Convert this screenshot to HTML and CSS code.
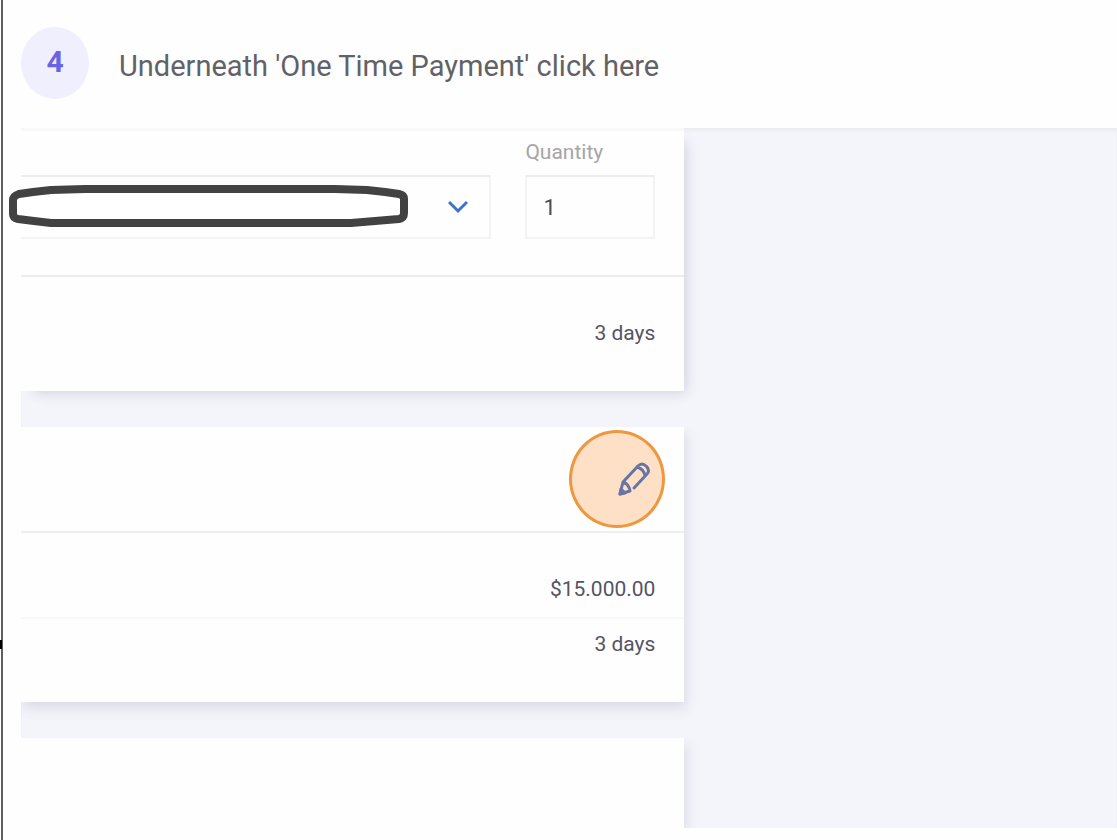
FILE: index.html
```html
<!DOCTYPE html>
<html lang="en">
<head>
<meta charset="utf-8">
<title>Step 4</title>
<link rel="stylesheet" href="styles.css">
</head>
<body>
<main class="step">
  <header class="step-header">
    <span class="step-number">4</span>
    <h1 class="step-title">Underneath 'One Time Payment' click here</h1>
  </header>
  <div class="panel">
    <div class="cards">
      <section class="card card-first">
        <form class="fields">
          <div class="select-wrap">
            <select class="product" aria-label="Product"><option></option></select>
            <svg class="chevron" viewBox="0 0 20 14" aria-hidden="true"><path d="M1 2l9 9 9-9"/></svg>
            <svg class="marker" viewBox="0 0 400 44" aria-hidden="true"><path d="M76 5L42 6L24 8L10 10Q4 12 4 16V30Q4 34 9 35L25 37L42 39H342L390 35Q395 34 395 29V15Q395 11 390 10L376 8L358 6L326 5Z"/></svg>
          </div>
          <div class="quantity">
            <label class="quantity-label" for="quantity">Quantity</label>
            <input class="quantity-input" id="quantity" type="text" value="1">
          </div>
        </form>
        <div class="row row-tall">3 days</div>
      </section>
      <section class="card">
        <div class="card-top">
          <button class="edit" type="button" aria-label="Edit">
            <svg class="pencil" viewBox="0 0 32 34" aria-hidden="true"><path d="M16 26L29 12Q32 9 29 5L28 4Q24 0 20 4L5 20L2 32L12 29M5 20Q11 22 12 29M19 5Q26 7 27 14"/><path class="tip" d="M2 32l1-5 4 4z"/></svg>
          </button>
        </div>
        <div class="row row-amount">$15.000.00</div>
        <div class="row row-days">3 days</div>
      </section>
      <section class="card card-last"></section>
    </div>
  </div>
</main>
</body>
</html>
```
FILE: styles.css
```css
* {
  box-sizing: border-box;
}

body {
  margin: 0;
  background: #fefefe;
  font-family: Roboto, "Liberation Sans", sans-serif;
}

.step {
  position: relative;
  min-height: 100vh;
  margin-left: 1px;
  padding: 0 0 12px 18px;
  border-left: 2px solid #5c6064;
}

.step::before {
  content: "";
  position: absolute;
  left: -3px;
  top: 640px;
  width: 2px;
  height: 9px;
  background: #000;
}

.step-header {
  display: flex;
  align-items: center;
  gap: 30px;
  height: 128px;
  padding-bottom: 2px;
}

.step-number {
  display: flex;
  align-items: center;
  justify-content: center;
  width: 68px;
  height: 72px;
  padding-bottom: 3px;
  border-radius: 50%;
  background: #f0effd;
  color: #6865e5;
  font-size: 30px;
  font-weight: 700;
}

.step-title {
  margin: 0;
  padding-top: 6px;
  color: #626266;
  font-size: 29px;
  font-weight: 400;
}

.panel {
  display: grid;
  grid-template-columns: 664fr 433fr;
  background: #f4f5fb;
  box-shadow: inset 0 3px 3px #ececf0;
}

.cards {
  display: grid;
  gap: 36px;
}

.card {
  background: #fefefe;
  box-shadow: 2px 6px 12px #d9dae4;
  clip-path: inset(0 -14px -22px 0);
}

.card-first {
  border-top: 3px solid #f8f8f9;
  clip-path: inset(0 -14px -22px -12px);
  box-shadow: 8px 8px 12px -6px #d0d1dc;
}

.card-last {
  height: 90px;
  clip-path: inset(0 -14px 0 0);
}

.fields {
  display: grid;
  grid-template-columns: 1fr 130px;
  align-items: end;
  gap: 34px;
  padding: 7px 29px 36px 0;
  border-bottom: 2px solid #ececee;
}

.select-wrap {
  position: relative;
}

.product,
.quantity-input {
  display: block;
  width: 100%;
  height: 64px;
  margin: 0;
  border: 2px solid #f3f3f4;
  border-top-color: #ededee;
  border-radius: 0;
  background: #fefefe;
  color: #4b4b50;
  font: 22px Roboto, "Liberation Sans", sans-serif;
}

.product {
  appearance: none;
  border-left: 0;
}

.quantity-input {
  padding: 0 16px;
}

.quantity-label {
  display: block;
  margin-bottom: 9px;
  color: #a5a5a8;
  font-size: 21px;
  line-height: 28px;
}

.chevron {
  position: absolute;
  right: 23px;
  top: 25px;
  width: 20px;
  height: 14px;
  fill: none;
  stroke: #3c73cf;
  stroke-width: 3;
  pointer-events: none;
}

.marker {
  position: absolute;
  left: -12px;
  top: 9px;
  width: 400px;
  height: 44px;
  fill: #fff;
  stroke: #424242;
  stroke-width: 8;
  stroke-linejoin: round;
  pointer-events: none;
}

.row {
  padding-right: 29px;
  color: #555464;
  font-size: 21px;
  line-height: 28px;
  text-align: right;
}

.row-tall {
  padding-top: 42px;
  padding-bottom: 44px;
}

.card-top {
  display: flex;
  justify-content: flex-end;
  padding: 3px 19px 3px 0;
  border-bottom: 2px solid #efeeee;
}

.edit {
  display: flex;
  align-items: center;
  justify-content: flex-end;
  width: 96px;
  height: 98px;
  padding: 0 12px 0 0;
  border: 3px solid #ee973f;
  border-radius: 50%;
  background: #fee0c7;
}

.pencil {
  width: 32px;
  height: 34px;
  overflow: visible;
  fill: none;
  stroke: #6874a4;
  stroke-width: 3;
  stroke-linecap: round;
  stroke-linejoin: round;
}

.tip {
  fill: #6874a4;
}

.row-amount {
  padding-top: 42px;
  padding-bottom: 14px;
  border-bottom: 2px solid #f8f8f9;
}

.row-days {
  padding-top: 11px;
  padding-bottom: 44px;
}
```
